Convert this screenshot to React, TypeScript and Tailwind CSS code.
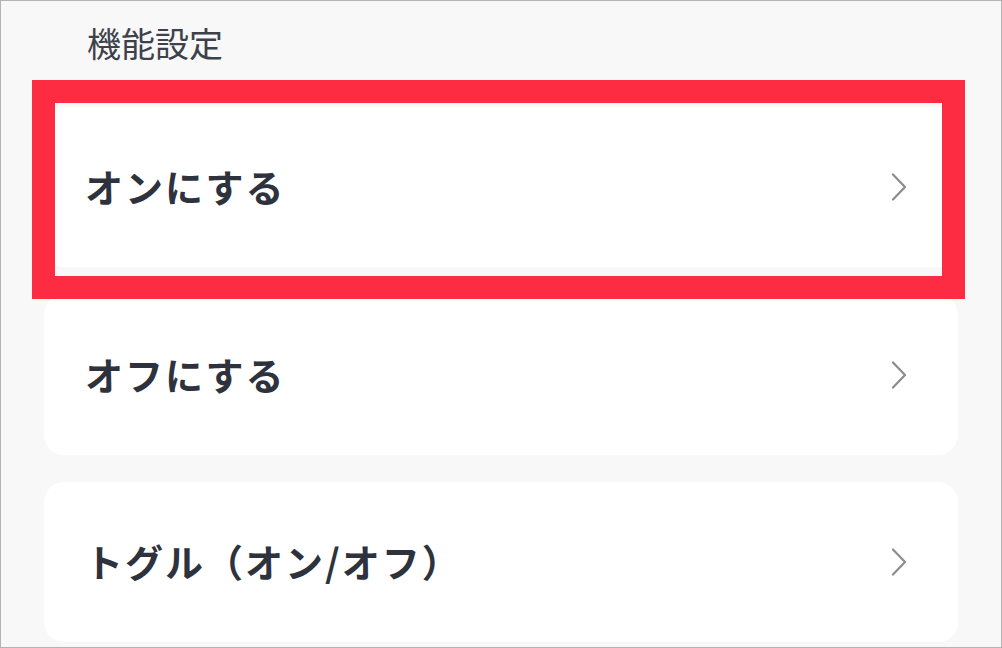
const items = ["オンにする", "オフにする", "トグル（オン/オフ）"];

function Chevron() {
  return (
    <svg width="18" height="28" viewBox="0 0 18 28" fill="none" className="shrink-0">
      <path d="M3 1.5 L15 14 L3 26.5" stroke="#8c8c8c" strokeWidth="2.2" strokeLinecap="round" strokeLinejoin="round" />
    </svg>
  );
}

export default function App() {
  return (
    <div
      className="relative w-[1002px] h-[648px] overflow-hidden bg-[#f8f8f8] border border-[#b4b4b4]"
      style={{ fontFamily: '"Noto Sans CJK JP", "Noto Sans", sans-serif' }}
    >
      <h2 className="pl-[86px] pt-[22px] text-[34px] leading-[40px] font-normal text-[#3d414a]">
        機能設定
      </h2>

      <div className="mt-[44px] ml-[43px] w-[914px] flex flex-col gap-[27.5px]">
        {items.map((label, i) => (
          <div
            key={i}
            className="h-[160px] rounded-[20px] bg-white flex items-center justify-between pl-[41px] pr-[50px]"
          >
            <span className="text-[38px] leading-[44px] font-bold text-[#2e323d] tracking-[2px] -translate-y-[1px]">{label}</span>
            <Chevron />
          </div>
        ))}
      </div>

      <div className="absolute left-[31px] top-[79px] w-[933px] h-[219px] border-[23.5px] border-[#fe2c42] pointer-events-none" />
    </div>
  );
}
